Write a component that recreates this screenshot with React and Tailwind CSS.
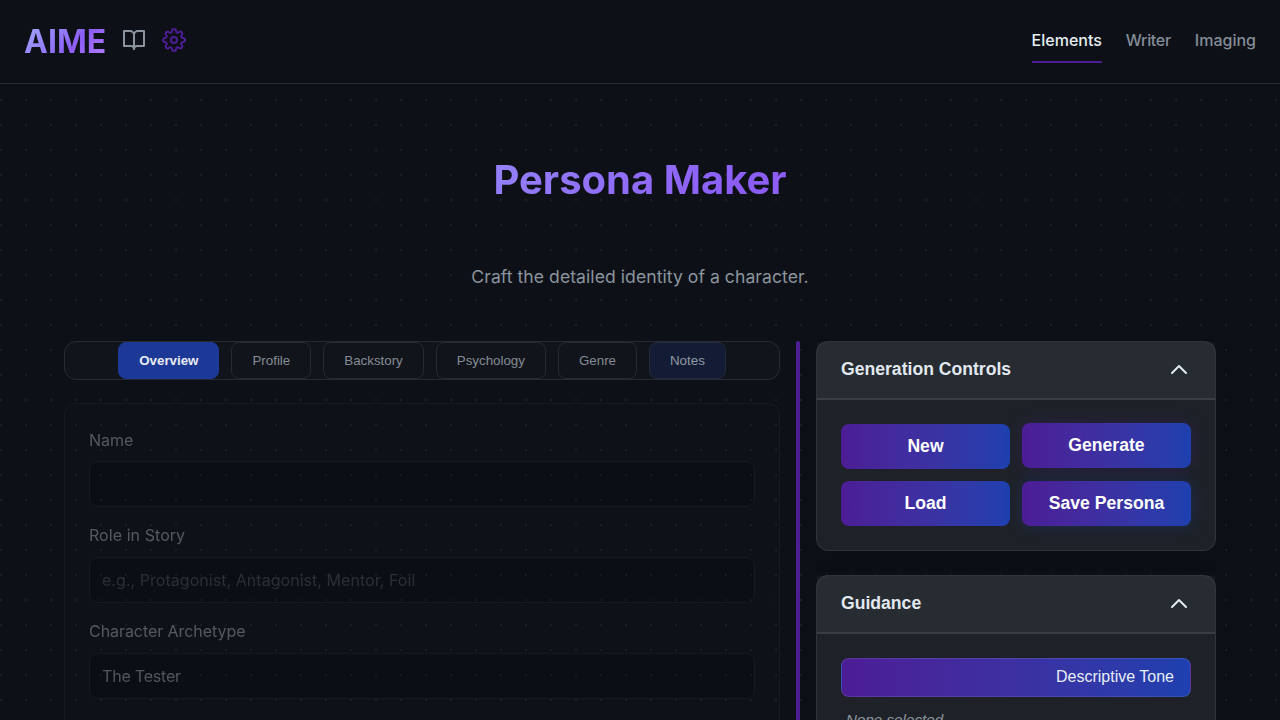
import { FiBookOpen, FiSettings } from "react-icons/fi";

const tabs = ["Overview", "Profile", "Backstory", "Psychology", "Genre", "Notes"];

function tabClass(name) {
  if (name === "Overview") return "border-[#1c3998] bg-[#1c3998] font-bold text-[#e8ebf0]";
  if (name === "Notes") return "border-[#222b3b] bg-[#141c35] text-[#9199a3]";
  return "border-[#262b32] bg-[#11151b] text-[#858b95]";
}

function Field({ label, value, placeholder, labelTracking = "", inputTracking = "" }) {
  return (
    <div className="group mb-4">
      <label className={"mb-2 block h-[26px] leading-6 text-[#d8dadd] group-first:h-[25px] " + labelTracking}>{label}</label>
      <input
        className={"block h-[46px] w-full rounded-lg border border-[#252a31] bg-[#010409]/50 px-3 text-[#ced2d8] placeholder-[#64676b] outline-none " + inputTracking}
        defaultValue={value}
        placeholder={placeholder}
      />
    </div>
  );
}

function Panel({ title, children }) {
  return (
    <section className="rounded-xl border border-[#30353d] bg-[#1e2228] shadow-[0_4px_20px_rgba(0,0,0,0.14)]">
      <header className="flex h-[58px] items-center justify-between border-b-2 border-[#393e46] bg-[#dceaff]/5 px-6 pb-0.5 text-[#e2e8f0]">
        <h2 className="text-[17.6px] font-bold">{title}</h2>
        <svg className="h-6 w-6" viewBox="0 0 24 24" fill="none" stroke="currentColor" strokeWidth="2" strokeLinecap="round" strokeLinejoin="round">
          <path d="M5 16l7-7 7 7" />
        </svg>
      </header>
      <div className="p-6">{children}</div>
    </section>
  );
}

function Action({ children, className = "" }) {
  return (
    <button className={"h-[45px] rounded-lg bg-linear-to-r from-[#4c1d95] to-[#1e40af] text-[17.6px] font-bold text-white " + className}>
      {children}
    </button>
  );
}

export default function App() {
  return (
    <div className="h-[720px] overflow-hidden bg-[#0d1117] bg-[radial-gradient(circle_at_1px_1px,#1b2027_1px,transparent_0)] bg-[length:25px_25px] bg-[position:0_-1px] font-['Inter',sans-serif] text-base">
      <header className="flex h-[84px] items-center justify-between border-b border-[#262b32] bg-[#0d1117] px-6">
        <div className="flex items-center gap-4">
          <div className="bg-linear-135 from-[#a5b4fc] via-[#8b5cf6] via-60% to-[#c084fc] bg-clip-text text-[32px] leading-[51px] font-bold text-transparent">AIME</div>
          <FiBookOpen className="mb-1 h-6 w-6 text-[#8b949e]" />
          <FiSettings className="mb-1 h-6 w-6 text-[#4c1d95]" />
        </div>
        <nav className="mb-0.5 flex gap-6 font-medium text-[#848d97]">
          <a className="flex h-[45px] items-center border-b-2 border-[#4c1d95] text-[#e6edf3]">Elements</a>
          <a className="flex h-[45px] items-center border-b-2 border-transparent tracking-[-0.3px]">Writer</a>
          <a className="flex h-[45px] items-center border-b-2 border-transparent">Imaging</a>
        </nav>
      </header>

      <main className="px-16 pt-16">
        <h1 className="bg-linear-135 from-[#a5b4fc] via-[#8b5cf6] via-59% to-[#c084fc] to-120% bg-clip-text text-center text-[40px] leading-[64px] font-bold text-transparent">Persona Maker</h1>
        <p className="mt-[50px] text-center text-[17.6px] leading-[30px] tracking-[0.045px] text-[#8b949e]">Craft the detailed identity of a character.</p>

        <div className="mt-[49px] flex items-start">
          <div className="w-[716px]">
            <div className="flex h-[39px] justify-center gap-3 rounded-xl border border-[#262b32] bg-[#11151b] font-['Liberation_Sans',sans-serif] text-[13.333px]">
              {tabs.map((t) => (
                <button key={t} className={"h-[37px] rounded-lg border px-5 " + tabClass(t)}>{t}</button>
              ))}
            </div>
            <div className="mt-[23px] h-[500px] rounded-xl border border-[#282d34] bg-[#161b22]/30 p-6 opacity-35">
              <Field label="Name" value="" />
              <Field label="Role in Story" placeholder="e.g., Protagonist, Antagonist, Mentor, Foil" labelTracking="tracking-[0.06px]" inputTracking="tracking-[0.045px]" />
              <Field label="Character Archetype" value="The Tester" labelTracking="tracking-[-0.06px]" inputTracking="tracking-[-0.2px]" />
            </div>
          </div>
          <div className="mx-4 h-[500px] w-1 rounded-sm bg-[#4c1d95]" />
          <aside className="flex w-[400px] flex-col gap-6 font-['Liberation_Sans',sans-serif]">
            <Panel title="Generation Controls">
              <div className="grid grid-cols-2 gap-3">
                <Action>New</Action>
                <Action className="-translate-y-px shadow-[0_0_15px_rgba(76,29,149,0.3)]">Generate</Action>
                <Action>Load</Action>
                <Action className="shadow-[0_0_15px_rgba(30,64,175,0.3)]">Save Persona</Action>
              </div>
            </Panel>
            <Panel title="Guidance">
              <div className="h-[39px] rounded-lg border border-white/10 bg-linear-to-r from-[#4c1d95] to-[#1e40af] px-4 text-right leading-[36px] text-[#e6edf3]">Descriptive Tone</div>
              <p className="mt-[11px] px-[5px] text-[15.2px] leading-6 text-[#8b949e] italic">None selected</p>
            </Panel>
          </aside>
        </div>
      </main>
    </div>
  );
}
